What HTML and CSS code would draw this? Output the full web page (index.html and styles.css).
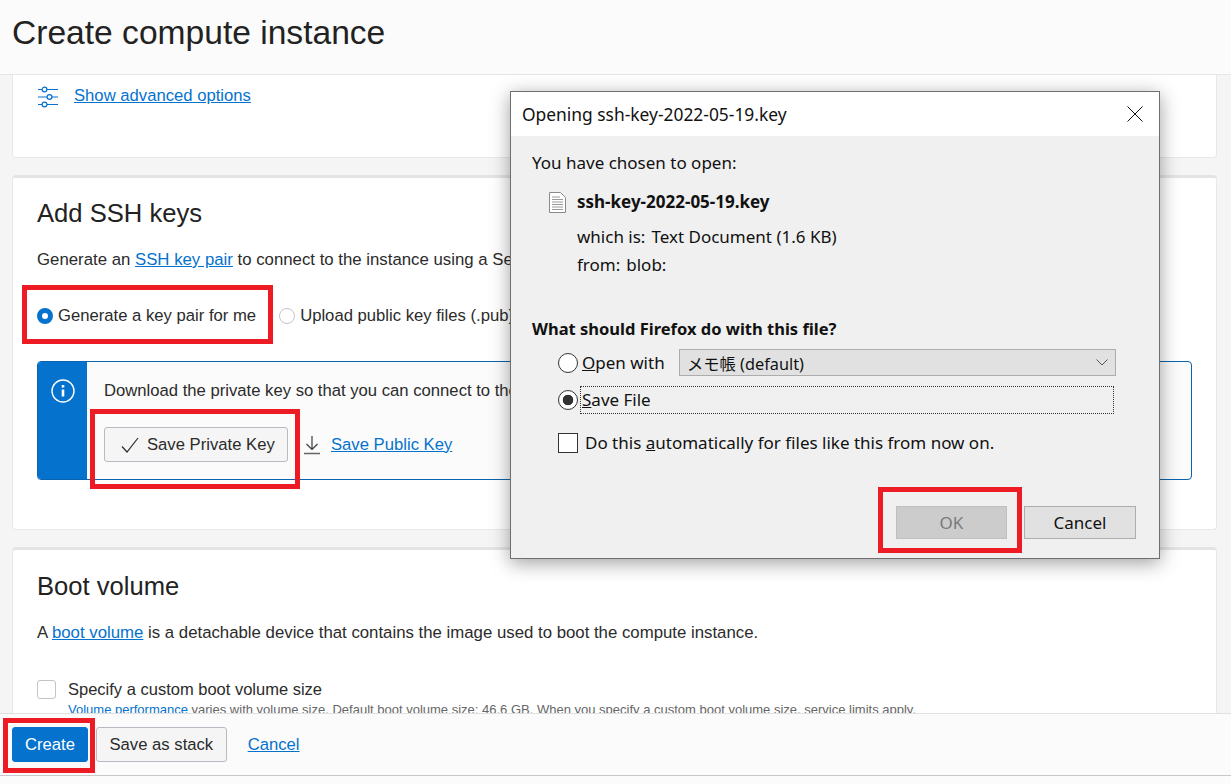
FILE: index.html
```html
<!DOCTYPE html>
<html lang="en">
<head>
<meta charset="utf-8">
<title>Create compute instance</title>
<link rel="stylesheet" href="styles.css">
</head>
<body>
<div class="page">
  <header class="header"><h1>Create compute instance</h1></header>
  <main class="main">
    <section class="card card-first">
      <div class="advanced">
        <svg class="sliders" width="22" height="22" viewBox="0 0 22 22" fill="none" stroke="#0572ce" stroke-width="1.2">
          <path d="M1 3.5h4M10 3.5h11M1 11h9M15 11h6M1 18.5h4M10 18.5h11"/>
          <circle cx="7.5" cy="3.5" r="2.4"/><circle cx="12.5" cy="11" r="2.4"/><circle cx="7.5" cy="18.5" r="2.4"/>
        </svg>
        <a href="#">Show advanced options</a>
      </div>
    </section>
    <section class="card card-ssh">
      <h2>Add SSH keys</h2>
      <p class="desc">Generate an <a href="#">SSH key pair</a> to connect to the instance using a Secure Shell (SSH) connection, or upload a public key that you already have.</p>
      <div class="radios">
        <span class="radio-row"><span class="oci-radio on"></span>Generate a key pair for me</span>
        <span class="radio-row"><span class="oci-radio"></span>Upload public key files (.pub)</span>
      </div>
      <div class="info">
        <div class="info-side">
          <svg width="26" height="26" viewBox="0 0 26 26" fill="none" stroke="#fff"><circle cx="13" cy="13" r="11" stroke-width="1.4"/><path d="M13 11.500v7" stroke-width="2.6"/><path d="M13 7v2.600" stroke-width="2.6"/></svg>
        </div>
        <div class="info-body">
          <p>Download the private key so that you can connect to the instance using SSH. It will not be shown again.</p>
          <div class="info-actions">
            <button class="btn btn-save">
              <svg width="18" height="16" viewBox="0 0 18 16" fill="none" stroke="#2b2b2b" stroke-width="1.2"><path d="M1 9.500l5 5.500L17 1"/></svg>
              Save Private Key
            </button>
            <svg class="dl" width="16" height="20" viewBox="0 0 16 20" fill="none" stroke="#3a3a3a" stroke-width="1.2"><path d="M8 1v13M2.500 9L8 14.500 13.500 9"/><path d="M0 18.500h16" stroke="#666" stroke-width="1.6"/></svg>
            <a href="#">Save Public Key</a>
          </div>
        </div>
      </div>
    </section>
    <section class="card card-boot">
      <h2>Boot volume</h2>
      <p class="desc">A <a href="#">boot volume</a> is a detachable device that contains the image used to boot the compute instance.</p>
      <div class="check-row"><span class="oci-check"></span>Specify a custom boot volume size</div>
      <p class="hint"><a href="#">Volume performance</a> varies with volume size. Default boot volume size: 46.6 GB. When you specify a custom boot volume size, service limits apply.</p>
    </section>
  </main>
  <footer class="footer">
    <button class="btn btn-primary">Create</button>
    <button class="btn btn-stack">Save as stack</button>
    <a href="#">Cancel</a>
  </footer>
</div>

<div class="dialog">
  <div class="dlg-title">
    <span>Opening ssh-key-2022-05-19.key</span>
    <svg width="16" height="16" viewBox="0 0 16 16" fill="none" stroke="#111" stroke-width="1"><path d="M.5.500l15 15M15.500.5l-15 15"/></svg>
  </div>
  <div class="dlg-body">
    <p class="dlg-chosen">You have chosen to open:</p>
    <div class="dlg-file">
      <svg width="17" height="21" viewBox="0 0 17 21" fill="#fff" stroke="#8a8a8a"><path d="M.5.500h11l5 5v15H.5z"/><path d="M3 5h8M3 7.500h11M3 10h11M3 12.500h11M3 15h11M3 17.500h11" stroke="#9a9a9a"/></svg>
      <strong>ssh-key-2022-05-19.key</strong>
    </div>
    <div class="dlg-meta"><span>which is:</span><span>Text Document (1.6 KB)</span></div>
    <div class="dlg-meta dlg-from"><span>from:</span><span>blob:</span></div>
    <h3>What should Firefox do with this file?</h3>
    <div class="dlg-open">
      <span class="win-radio"></span>
      <span class="dlg-open-label"><u>O</u>pen with</span>
      <div class="select"><span>メモ帳 (default)</span>
        <svg width="12" height="7" viewBox="0 0 12 7" fill="none" stroke="#555"><path d="M.5.500L6 6 11.500.5"/></svg>
      </div>
    </div>
    <div class="dlg-save">
      <span class="win-radio on"></span>
      <span class="focus-line"><u>S</u>ave File</span>
    </div>
    <div class="dlg-auto">
      <span class="win-check"></span>
      <span>Do this <u>a</u>utomatically for files like this from now on.</span>
    </div>
    <div class="dlg-buttons">
      <button class="win-btn disabled">OK</button>
      <button class="win-btn">Cancel</button>
    </div>
  </div>
</div>

<div class="mark mark-generate"></div>
<div class="mark mark-save"></div>
<div class="mark mark-ok"></div>
<div class="mark mark-create"></div>
</body>
</html>
```
FILE: styles.css
```css
* { box-sizing: border-box; }
html, body { margin: 0; height: 100%; overflow: hidden; }
body {
  font-family: "Liberation Sans", Arial, sans-serif;
  font-size: 16.67px;
  color: #2b2b2b;
  background: #fbfbfb;
}
a { color: #0572ce; text-decoration: underline; }
p { margin: 0; }

.page { display: flex; flex-direction: column; height: 776px; }

.header {
  height: 75px;
  flex: none;
  background: #fbfbfb;
  border-bottom: 1px solid #e6e6e6;
  padding: 14px 12px 0;
}
.header h1 { margin: 0; font-size: 33.6px; font-weight: 400; line-height: 38px; color: #222; }

.main {
  flex: 1;
  min-height: 0;
  overflow: hidden;
  background: #f5f5f5;
  padding: 0 14px 0 12px;
}
.card {
  background: #fff;
  border: 1px solid #e8e8e8;
  border-top: 3px solid #e4e4e6;
  border-radius: 4px;
  padding: 0 24px;
  margin-bottom: 17px;
}
.card-first {
  height: 83px;
  border-top: 0;
  border-radius: 0 0 4px 4px;
  padding-top: 9px;
}
.advanced { display: flex; align-items: center; gap: 15px; line-height: 22px; }
.advanced .sliders { flex: none; margin-top: 2px; }

.card h2 { margin: 0; font-size: 25.6px; font-weight: 400; line-height: 30px; color: #222; }
.card-ssh { height: 355px; padding-top: 20px; }
.desc { margin-top: 21px; font-size: 16.8px; line-height: 22px; white-space: nowrap; }
.radios { display: flex; gap: 23px; margin-top: 34px; line-height: 22px; }
.radio-row { display: flex; align-items: center; gap: 5px; white-space: nowrap; }
.oci-radio {
  width: 16px; height: 16px; border-radius: 50%;
  border: 1px solid #c4c4c8; background: #fff; flex: none;
}
.oci-radio.on { background: #fff; border: 5px solid #0572ce; }

.info {
  display: flex;
  height: 119px;
  margin-top: 34px;
  border: 1px solid #0a64ad;
  border-radius: 4px;
  background: #fbfbfb;
  overflow: hidden;
}
.info-side {
  width: 49px; flex: none; background: #0572ce;
  display: flex; justify-content: center; padding-top: 16px;
}
.info-body { padding: 18px 17px 0; }
.info-body p { line-height: 22px; white-space: nowrap; }
.info-actions { display: flex; align-items: center; margin-top: 25px; }
.info-actions .dl { margin: 0 11px 0 16px; }

.btn {
  font: inherit;
  color: #2b2b2b;
  height: 35px;
  padding: 0 12px;
  border: 1px solid #b8bac2;
  border-radius: 3px;
  background: #f5f5f5;
  display: inline-flex;
  align-items: center;
}
.btn-save { width: 184px; padding: 0 12px 0 16px; gap: 8px; white-space: nowrap; }
.btn-primary { background: #0572ce; border-color: #0572ce; color: #fff; }
.btn-stack { padding: 0 12.5px; }

.card-boot { height: 300px; padding-top: 21px; }
.check-row { display: flex; align-items: center; gap: 12px; margin-top: 34px; font-size: 16.5px; line-height: 22px; }
.oci-check {
  width: 19px; height: 19px; flex: none;
  border: 1px solid #c4c4c8; border-radius: 3px; background: #fff;
}
.hint { margin: 2px 0 0 31px; font-size: 13px; line-height: 16px; color: #666; white-space: nowrap; }

.footer {
  flex: none;
  height: 63px;
  background: #fbfbfb;
  border-top: 1px solid #e0e0e0;
  border-bottom: 1px solid #c8c8cc;
  padding: 13px 12px 0;
  display: flex;
  align-items: flex-start;
  gap: 8px;
}
.footer a { margin: 8px 0 0 13px; line-height: 20px; }

.dialog {
  position: absolute;
  left: 510px; top: 91px;
  width: 650px; height: 468px;
  border: 1px solid #6e6e6e;
  background: #f0f0f0;
  box-shadow: 0 4px 18px rgba(0,0,0,.38);
  font-family: "Noto Sans", "Noto Sans CJK JP", sans-serif;
  font-size: 17px;
  color: #111;
  display: flex;
  flex-direction: column;
}
.dlg-title {
  height: 44px;
  flex: none;
  background: #fff;
  font-size: 17.4px;
  display: flex;
  align-items: center;
  justify-content: space-between;
  padding: 0 16px 0 11px;
}
.dlg-body { flex: 1; padding: 16px 0 0 21px; display: flex; flex-direction: column; }
.dlg-chosen { line-height: 22px; }
.dlg-file { display: flex; align-items: center; gap: 11px; margin: 17px 0 0 17px; line-height: 22px; }
.dlg-file strong { font-weight: 700; }
.dlg-meta { display: flex; gap: 6px; margin: 13px 0 0 45px; line-height: 22px; }
.dlg-from { margin-top: 6px; }
.dlg-body h3 { margin: 42px 0 0; font-size: 16.5px; font-weight: 700; line-height: 22px; }
.dlg-open { display: flex; align-items: center; margin: 9px 43px 0 26px; height: 27px; }
.dlg-open-label { margin-left: 4px; width: 97px; }
.win-radio {
  width: 20px; height: 20px; flex: none; border-radius: 50%;
  border: 1px solid #333; background: #fff;
  display: inline-block;
}
.win-radio.on { background: radial-gradient(circle, #333 0 5px, #fff 5.6px); }
.select {
  flex: 1;
  height: 27px;
  font-size: 16.3px;
  background: #e1e1e1;
  border: 1px solid #adadad;
  display: flex;
  align-items: center;
  justify-content: space-between;
  padding: 0 7px 0 7px;
}
.dlg-save { display: flex; align-items: center; margin: 10px 45px 0 26px; height: 28px; }
.focus-line {
  flex: 1; height: 28px; line-height: 26px;
  margin-left: 2px; padding-left: 1px;
  border: 1px dotted #333;
}
.dlg-auto { display: flex; align-items: center; gap: 7px; margin: 18px 0 0 26px; line-height: 22px; white-space: nowrap; }
.win-check { width: 20px; height: 20px; flex: none; border: 1px solid #333; background: #fff; }
.dlg-buttons { display: flex; justify-content: flex-end; gap: 17px; margin: 52px 23px 0 0; }
.win-btn {
  font: inherit; color: #111;
  width: 112px; height: 33px; padding: 0;
  background: #e1e1e1;
  border: 1px solid #adadad;
}
.win-btn.disabled { width: 111px; background: #cccccc; border-color: #bfbfbf; color: #7a7a7a; }

.mark { position: absolute; border: 5px solid #ed1c24; }
.mark-generate { left: 22px; top: 285px; width: 251px; height: 59px; }
.mark-save { left: 90px; top: 409px; width: 210px; height: 80px; }
.mark-ok { left: 878px; top: 487px; width: 144px; height: 66px; }
.mark-create { left: 3px; top: 718px; width: 92px; height: 55px; }
```
